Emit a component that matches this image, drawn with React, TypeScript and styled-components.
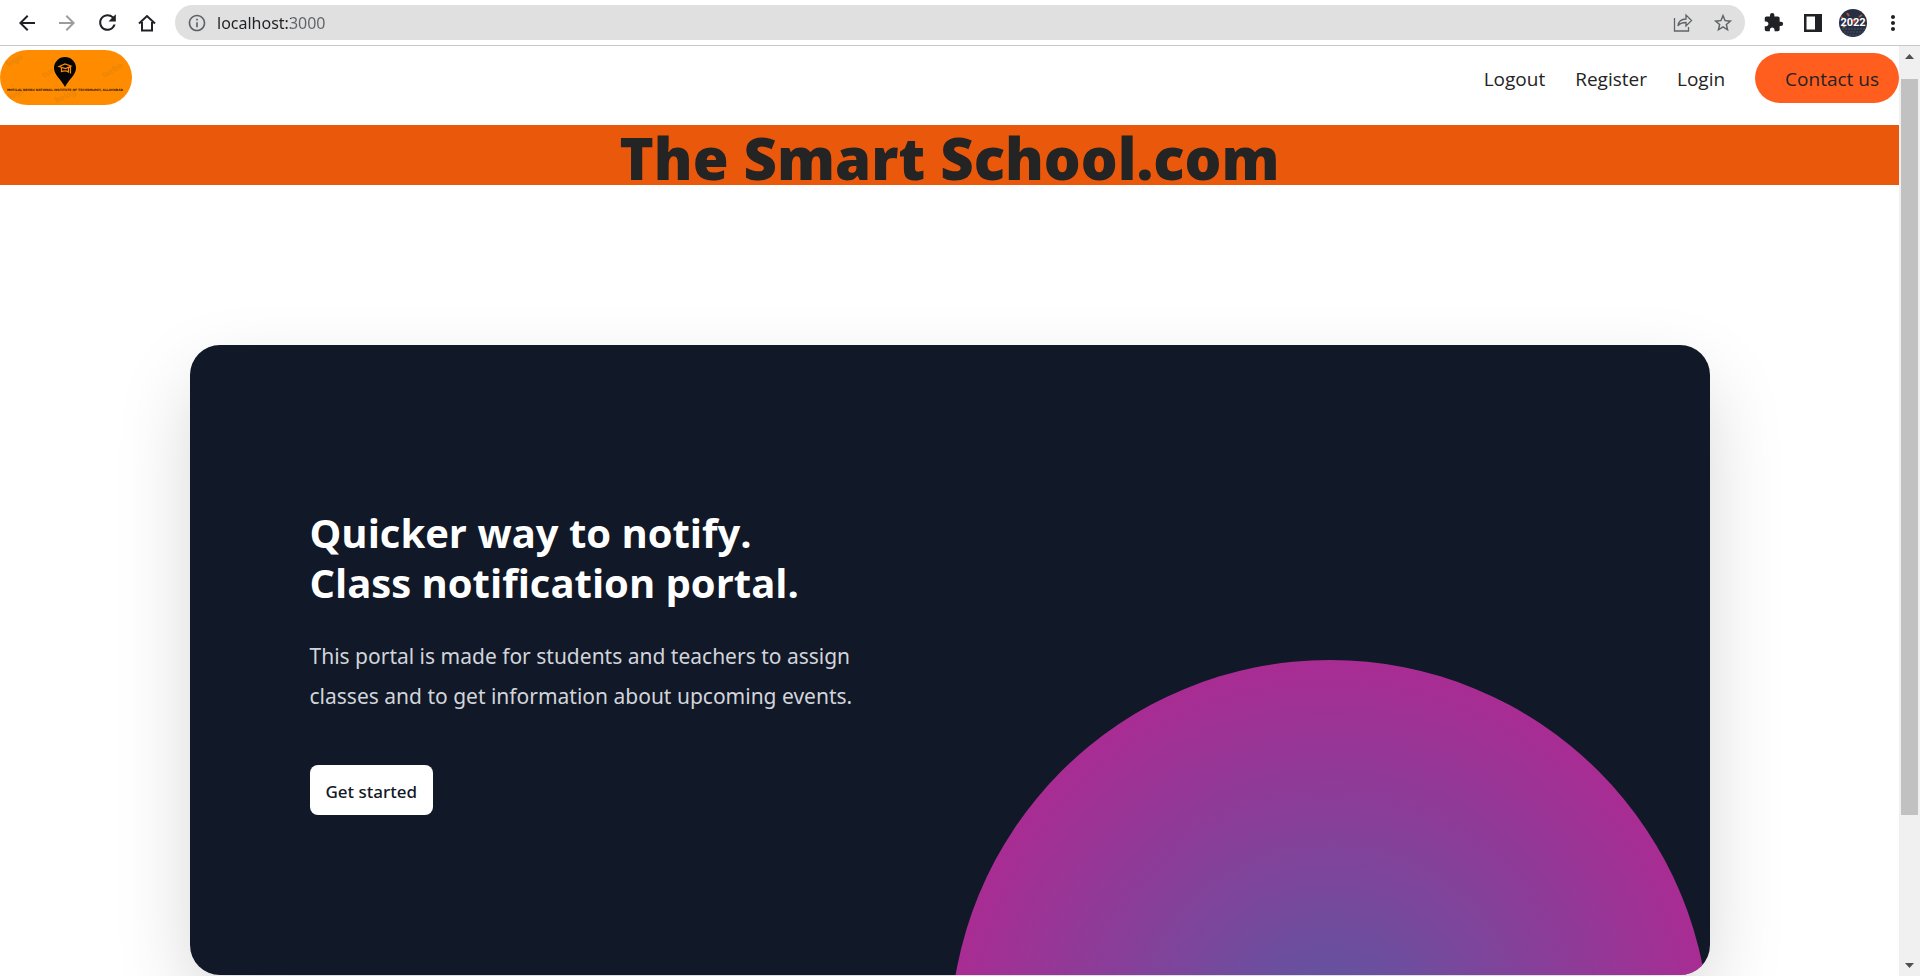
import React from "react";
import styled, { createGlobalStyle } from "styled-components";
import { MdArrowBack, MdArrowForward, MdRefresh, MdExtension, MdMoreVert, MdStarBorder, MdInfoOutline } from "react-icons/md";

const GlobalStyle = createGlobalStyle`
  *, *::before, *::after { box-sizing: border-box; }
  body {
    margin: 0;
    background: #fff;
    color: #242424;
    font-family: "Noto Sans", "Open Sans", sans-serif;
  }
  button, input { font: inherit; }
`;

const Browser = styled.div`
  display: flex;
  flex-direction: column;
  height: 100vh;
  overflow: hidden;
`;

const Toolbar = styled.header`
  display: flex;
  align-items: center;
  flex: none;
  height: 46px;
  padding: 0 13px;
  border-bottom: 1px solid #c8c8c8;
`;

const IconButton = styled.button<{ $color?: string; $gap?: number }>`
  display: grid;
  place-items: center;
  flex: none;
  width: 28px;
  height: 28px;
  margin: 0 ${(p) => p.$gap ?? 12}px 0 0;
  padding: 0;
  border: 0;
  background: none;
  color: ${(p) => p.$color ?? "#202124"};
`;

const AddressBar = styled.label`
  display: flex;
  align-items: center;
  flex: 1;
  height: 35px;
  margin: 0 14px 0 2px;
  padding: 0 8px 0 12px;
  border-radius: 18px;
  background: #e0e0e0;
  color: #5f6368;
`;

const AddressInput = styled.input`
  flex: 1;
  min-width: 0;
  margin: 0 0 0 10px;
  padding: 0;
  border: 0;
  outline: 0;
  font-size: 16px;
  background: linear-gradient(to right, #202124 74px, #5f6368 74px);
  background-clip: text;
  -webkit-background-clip: text;
  -webkit-text-fill-color: transparent;
`;

const Viewport = styled.div`
  display: flex;
  flex: 1;
  min-height: 0;
`;

const Page = styled.main`
  flex: 1;
  min-width: 0;
  overflow: hidden;
`;

const SiteHeader = styled.div`
  display: flex;
  justify-content: space-between;
  align-items: center;
  height: 79px;
  padding-bottom: 16px;
`;

const LogoLink = styled.a`
  display: block;
  width: 132px;
  height: 55px;
  border-radius: 28px;
  overflow: hidden;
  background: #ff8c00;
`;

const Nav = styled.nav`
  display: flex;
  align-items: center;
  gap: 30px;
`;

const NavLink = styled.a`
  padding: 11px 0 9px;
  color: #242424;
  font-family: "Open Sans", sans-serif;
  font-size: 19px;
  line-height: 30px;
  text-decoration: none;
`;

const ContactLink = styled(NavLink)`
  padding-left: 30px;
  padding-right: 20px;
  border-radius: 25px;
  background: #ff5e1f;
`;

const Banner = styled.h1`
  margin: 0;
  padding-top: 6px;
  background: #ea580c;
  font-family: "Open Sans", sans-serif;
  font-size: 58px;
  font-weight: 800;
  line-height: 54px;
  text-align: center;
`;

const Hero = styled.section`
  max-width: 1600px;
  margin: 0 auto;
  padding: 160px 40px;
`;

const Card = styled.div`
  position: relative;
  overflow: hidden;
  padding: 160px 120px;
  border-radius: 30px;
  background: #111827;
`;

const CardShadow = styled.div`
  border-radius: 30px;
  box-shadow: 0 32px 80px -6px rgba(0, 0, 0, 0.18);
`;

const Glow = styled.svg`
  position: absolute;
  top: 315px;
  left: 50%;
  width: 50%;
  aspect-ratio: 1;
`;

const Copy = styled.div`
  position: relative;
  max-width: 580px;
`;

const Title = styled.h2`
  margin: 0;
  padding: 3px 0 28px;
  color: #fff;
  font-family: "Open Sans", sans-serif;
  font-size: 40px;
  font-weight: 700;
  line-height: 50px;
`;

const Lead = styled.p`
  margin: 0 0 49px;
  color: #d1d5db;
  font-size: 21px;
  line-height: 40px;
`;

const StartButton = styled.button`
  height: 50px;
  padding: 2px 16px 0;
  border: 0;
  border-radius: 8px;
  background: #fff;
  color: #111827;
  font-size: 17px;
  font-weight: 500;
`;

const Scrollbar = styled.div`
  display: flex;
  flex-direction: column;
  flex: none;
  width: 21px;
  background: #f0f0f0;
`;

const ScrollArrow = styled.button`
  display: grid;
  place-items: center;
  height: 21px;
  padding: 0;
  border: 0;
  background: none;
`;

const Track = styled.div`
  flex: 1;
  padding: 12px 2px 0;
`;

const Thumb = styled.div`
  height: 84%;
  background: #c1c1c1;
`;

function Logo() {
  return (
    <svg width="132" height="55" viewBox="0 0 132 55" role="img" aria-label="Institute logo">
      <g fill="#ec8508" fontSize="8" fontWeight="700">
        <text transform="translate(8 17) rotate(-30)">logo</text>
        <text transform="translate(44 28) rotate(-30)">tur</text>
        <text transform="translate(104 28) rotate(-30)">turbo</text>
        <text transform="translate(10 50) rotate(-30)">logo</text>
        <text transform="translate(56 53) rotate(-24)">bolog</text>
      </g>
      <path d="M65 37C61 29 54 25 54 18a11 11 0 0 1 22 0c0 7-7 11-11 19z" fill="#050505" />
      <path
        d="M59 16.500l6-2.500 6 2-5.500 2.500zM61.500 18v3.500c2.500-1 5-1 7 .5V18M70.500 16v7.500"
        fill="none"
        stroke="#ff8c00"
        strokeWidth="1.200"
      />
      <text x="65" y="41" fontSize="3" fontWeight="900" textAnchor="middle" fill="#2c1800" fontFamily="DejaVu Sans, sans-serif">
        MOTILAL NEHRU NATIONAL INSTITUTE OF TECHNOLOGY, ALLAHABAD
      </text>
    </svg>
  );
}

function Avatar() {
  return (
    <svg width="28" height="28" viewBox="0 0 28 28" aria-hidden="true">
      <defs>
        <clipPath id="avatar"><circle cx="14" cy="14" r="14" /></clipPath>
      </defs>
      <g clipPath="url(#avatar)">
        <rect width="28" height="28" fill="#273043" />
        <path d="M0 20h28M2 23h24M4 26h20" stroke="#4b5262" strokeDasharray="2 1" />
        <path d="M2 8l3 2M8 4l2 3M23 6l-3 2" stroke="#b5533c" strokeWidth="2" />
        <circle cx="15" cy="12" r="2" fill="#c0392b" />
        <circle cx="5" cy="17" r="1.500" fill="#d98c5f" />
        <text x="14" y="17" fontSize="11" fontWeight="700" textAnchor="middle" fill="#fff" fontFamily="Roboto, sans-serif">2022</text>
      </g>
    </svg>
  );
}

export default function App() {
  return (
    <Browser>
      <GlobalStyle />
      <Toolbar>
        <IconButton aria-label="Back"><MdArrowBack size={24} /></IconButton>
        <IconButton aria-label="Forward" $color="#9a9c9e"><MdArrowForward size={24} /></IconButton>
        <IconButton aria-label="Reload"><MdRefresh size={25} /></IconButton>
        <IconButton aria-label="Home">
          <svg width="20" height="20" viewBox="0 0 20 20" fill="none" stroke="currentColor" strokeWidth="2">
            <path d="M2 10.500L10 3l8 7.500M5 9v8.500h10V9" />
          </svg>
        </IconButton>
        <AddressBar>
          <MdInfoOutline size={20} />
          <AddressInput aria-label="Address" defaultValue="localhost:3000" />
          <IconButton type="button" aria-label="Share" $color="#5f6368">
            <svg width="20" height="20" viewBox="0 0 20 20" fill="none" stroke="currentColor" strokeWidth="1.300">
              <path d="M1.500 5v13h14v-4M5 13c.5-5 3-7 8-7V2l5.500 5.500L13 13V9.500c-4 0-6.500 1-8 3.500z" />
            </svg>
          </IconButton>
          <IconButton type="button" aria-label="Bookmark" $color="#5f6368" $gap={0}><MdStarBorder size={22} /></IconButton>
        </AddressBar>
        <IconButton aria-label="Extensions"><MdExtension size={21} /></IconButton>
        <IconButton aria-label="Side panel">
          <svg width="18" height="18" viewBox="0 0 18 18">
            <path fill="currentColor" fillRule="evenodd" d="M0 0h18v18H0zM2.500 2.500v13H11v-13z" />
          </svg>
        </IconButton>
        <IconButton aria-label="Profile"><Avatar /></IconButton>
        <IconButton aria-label="Menu" $gap={0}><MdMoreVert size={24} /></IconButton>
      </Toolbar>
      <Viewport>
        <Page>
          <SiteHeader>
            <LogoLink href="#"><Logo /></LogoLink>
            <Nav>
              <NavLink href="#">Logout</NavLink>
              <NavLink href="#">Register</NavLink>
              <NavLink href="#">Login</NavLink>
              <ContactLink href="#">Contact us</ContactLink>
            </Nav>
          </SiteHeader>
          <Banner>The Smart School.com</Banner>
          <Hero>
            <CardShadow>
              <Card>
                <Glow viewBox="0 0 1024 1024" aria-hidden="true">
                  <defs>
                    <radialGradient id="glow">
                      <stop stopColor="#7775d6" />
                      <stop offset="1" stopColor="#e935c1" />
                    </radialGradient>
                  </defs>
                  <circle cx="512" cy="512" r="512" fill="url(#glow)" fillOpacity="0.7" />
                </Glow>
                <Copy>
                  <Title>Quicker way to notify.<br />Class notification portal.</Title>
                  <Lead>This portal is made for students and teachers to assign classes and to get information about upcoming events.</Lead>
                  <StartButton>Get started</StartButton>
                </Copy>
              </Card>
            </CardShadow>
          </Hero>
        </Page>
        <Scrollbar>
          <ScrollArrow aria-label="Scroll up">
            <svg width="9" height="5" viewBox="0 0 9 5"><path d="M0 5l4.500-5L9 5z" fill="#505050" /></svg>
          </ScrollArrow>
          <Track><Thumb /></Track>
          <ScrollArrow aria-label="Scroll down">
            <svg width="9" height="5" viewBox="0 0 9 5"><path d="M0 0l4.500 5L9 0z" fill="#505050" /></svg>
          </ScrollArrow>
        </Scrollbar>
      </Viewport>
    </Browser>
  );
}
